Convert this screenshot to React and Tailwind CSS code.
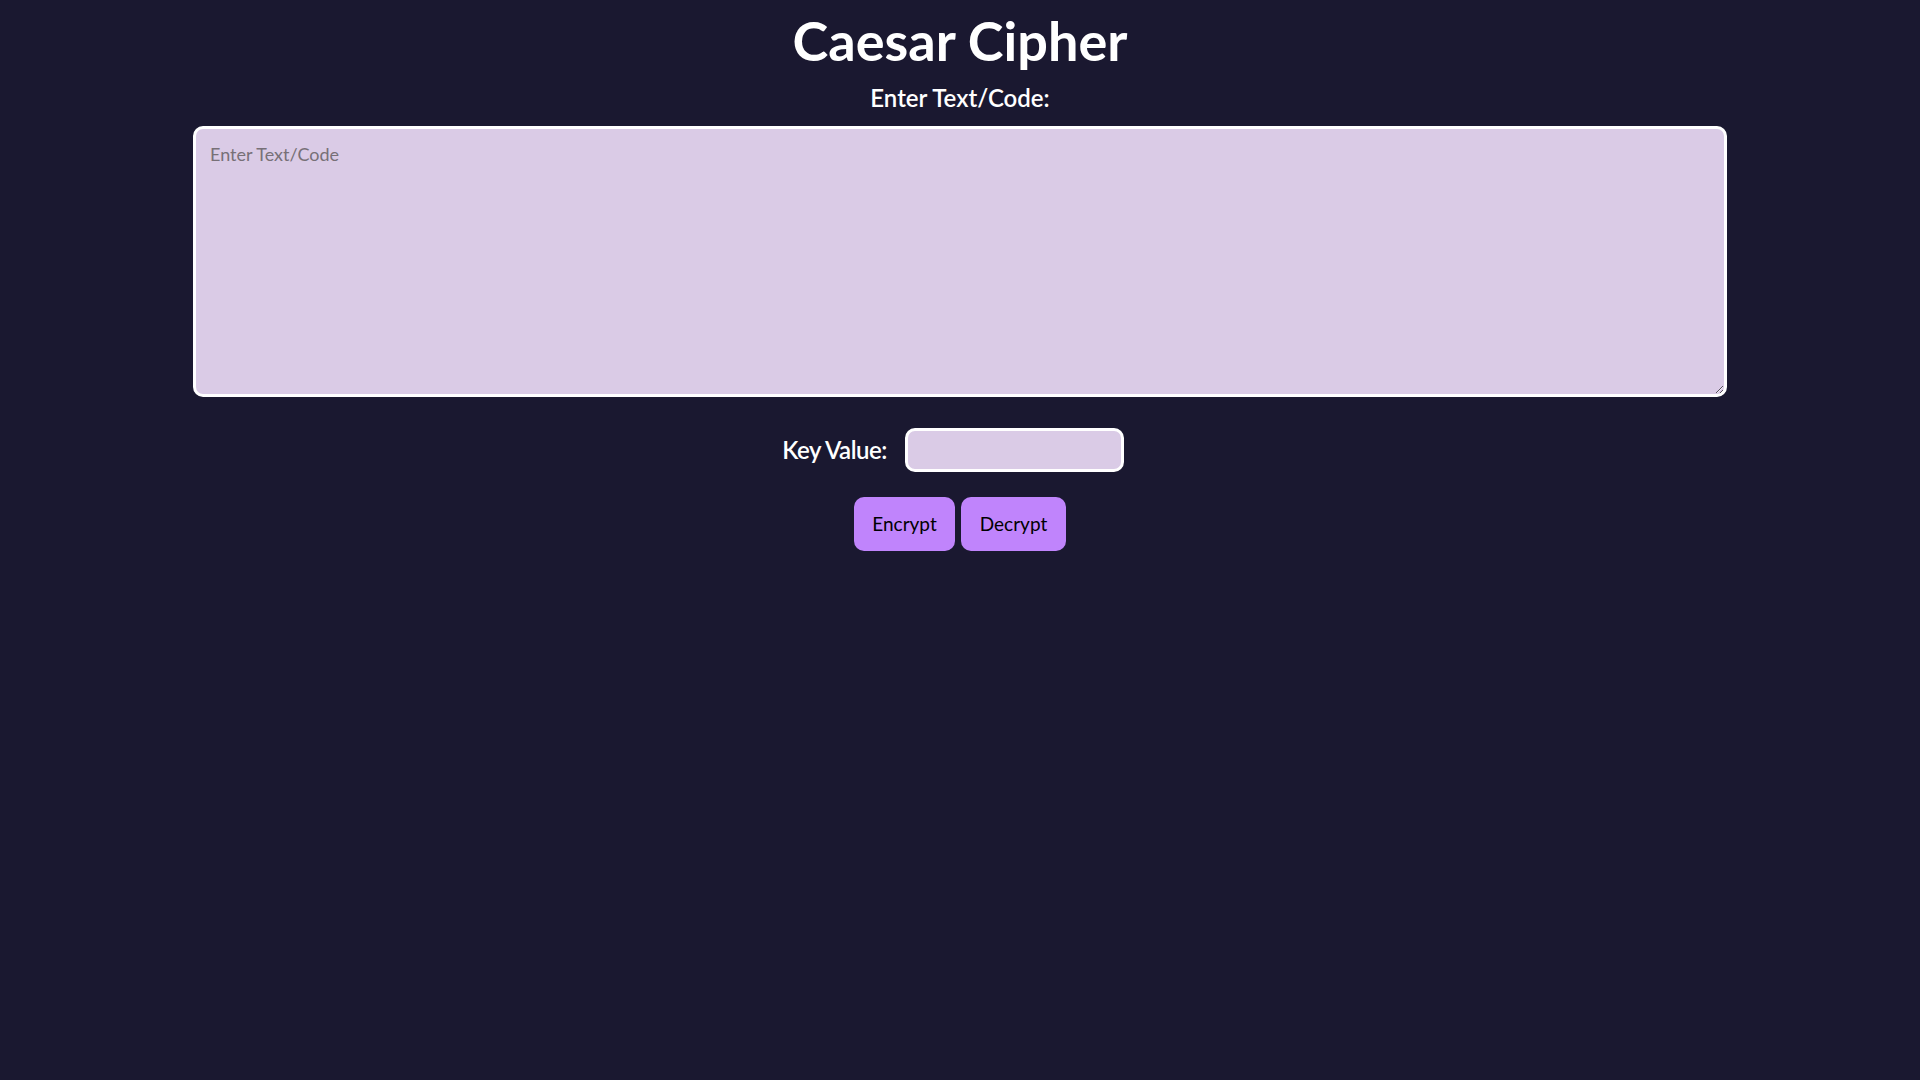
import React, { useState } from "react";

const App = () => {
  const [text, setText] = useState("");
  const [key, setKey] = useState("");

  return (
    <div
      className="min-h-screen w-full bg-[#1a1830] text-white flex flex-col items-center"
      style={{ fontFamily: "Lato, 'Open Sans', sans-serif" }}
    >
      <h1 className="text-[54px] font-bold leading-none mt-[14px]">Caesar Cipher</h1>
      <label className="text-[24px] font-semibold mt-[18px] leading-none">Enter Text/Code:</label>
      <textarea
        value={text}
        onChange={(e) => setText(e.target.value)}
        placeholder="Enter Text/Code"
        className="mt-[16px] w-[1534px] h-[271px] bg-[#dacbe6] border-[3px] border-white rounded-[10px] px-[14px] pt-[12px] pb-[14px] text-[18px] text-black placeholder:text-[#777077] outline-none"
      />
      <div className="flex items-center gap-[18px] mt-[31px] -ml-[14px]">
        <span className="text-[24px] font-semibold tracking-[-0.5px]">Key Value:</span>
        <input
          value={key}
          onChange={(e) => setKey(e.target.value)}
          className="w-[219px] h-[44px] bg-[#dacbe6] border-[3px] border-white rounded-[10px] px-2 text-black outline-none"
        />
      </div>
      <div className="flex gap-[6px] mt-[25px]">
        <button className="w-[101px] h-[54px] bg-[#c084fc] rounded-[10px] text-black text-[19px]">
          Encrypt
        </button>
        <button className="w-[105px] h-[54px] bg-[#c084fc] rounded-[10px] text-black text-[19px]">
          Decrypt
        </button>
      </div>
    </div>
  );
};

export default App;
